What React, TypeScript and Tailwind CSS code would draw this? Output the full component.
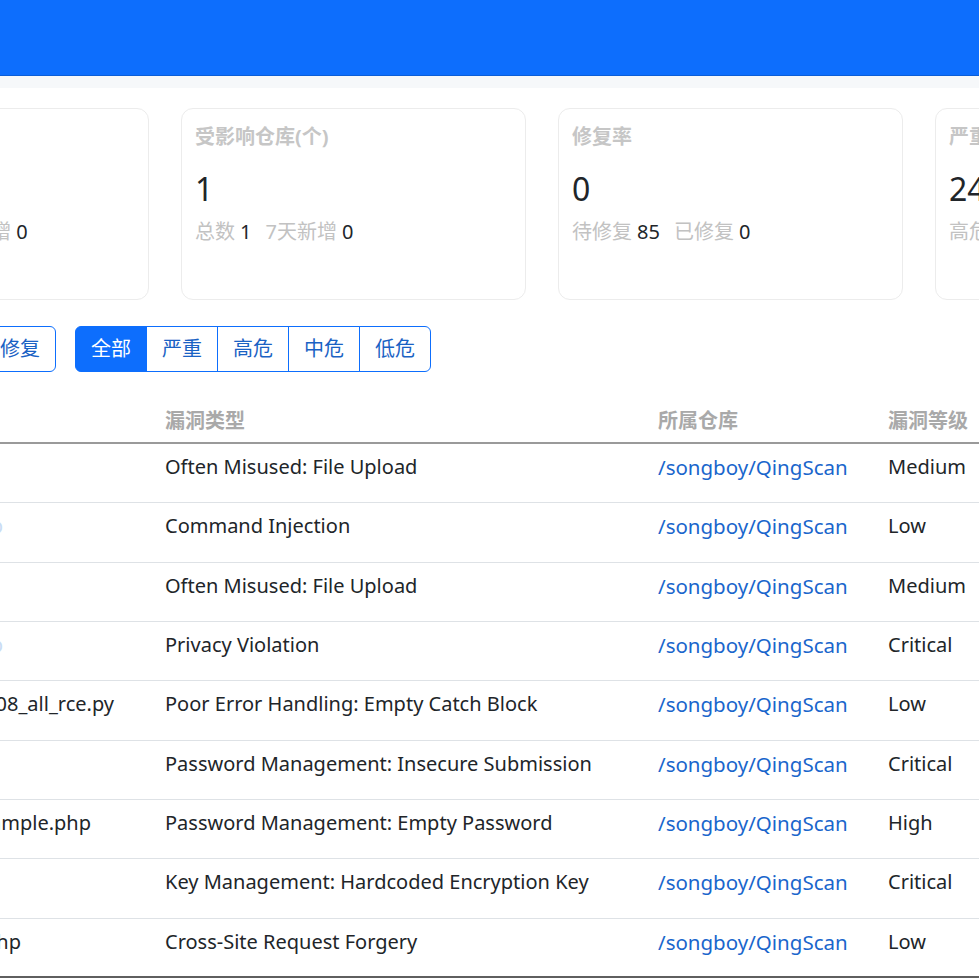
import { ReactNode } from "react";

const font = {
  fontFamily: '"Noto Sans", "Noto Sans CJK SC", sans-serif',
};

type Stat = {
  title: string;
  value: string;
  parts: [string, string][];
};

const stats: Stat[] = [
  { title: "漏洞总数(个)", value: "85", parts: [["漏洞总数", "85"], ["7天新增", "0"]] },
  { title: "受影响仓库(个)", value: "1", parts: [["总数", "1"], ["7天新增", "0"]] },
  { title: "修复率", value: "0", parts: [["待修复", "85"], ["已修复", "0"]] },
  { title: "严重漏洞(个)", value: "24", parts: [["高危", "9"], ["中危", "30"]] },
];

// fileW: where the (mostly hidden) path ends, measured from the cell's text start
const rows = [
  { file: "upload.php", fileW: 150, link: false, type: "Often Misused: File Upload", level: "Medium" },
  { file: "cmd.php", fileW: 193, link: true, type: "Command Injection", level: "Low" },
  { file: "file.php", fileW: 150, link: false, type: "Often Misused: File Upload", level: "Medium" },
  { file: "user.php", fileW: 193, link: true, type: "Privacy Violation", level: "Critical" },
  { file: "thinkphp5_0_08_all_rce.py", fileW: 304, link: false, type: "Poor Error Handling: Empty Catch Block", level: "Low" },
  { file: "login.html", fileW: 150, link: false, type: "Password Management: Insecure Submission", level: "Critical" },
  { file: "sqli_example.php", fileW: 281, link: false, type: "Password Management: Empty Password", level: "High" },
  { file: "app.php", fileW: 150, link: false, type: "Key Management: Hardcoded Encryption Key", level: "Critical" },
  { file: "csrf_test.php", fileW: 211, link: false, type: "Cross-Site Request Forgery", level: "Low" },
];

function StatCard({ stat }: { stat: Stat }) {
  return (
    <div className="w-[345px] h-[192px] flex-none rounded-[12px] border border-[#ececec] bg-white px-[13px] pt-[14px]">
      <div className="text-[20px] leading-[27px] font-bold text-[#c6c6c6]">{stat.title}</div>
      <div className="mt-[20px] text-[32px] leading-[38px] text-[#212529]">{stat.value}</div>
      <div className="mt-[9px] flex text-[20px] leading-[30px]">
        {stat.parts.map(([label, num]) => (
          <span key={label} className="mr-[14px]">
            <span className="text-[#c2c2c2]">{label}</span>
            <span className="ml-[5px] text-[#212529]">{num}</span>
          </span>
        ))}
      </div>
    </div>
  );
}

function Btn({ children, active, first, last }: { children: ReactNode; active?: boolean; first?: boolean; last?: boolean }) {
  return (
    <button
      className={
        "h-[46px] px-[15px] text-[20px] leading-[30px] border border-[#0d6efd] -ml-px first:ml-0 " +
        (active ? "bg-[#0d6efd] text-white " : "bg-white text-[#1a62c4] ") +
        (first ? "rounded-l-[6px] " : "") +
        (last ? "rounded-r-[6px]" : "")
      }
    >
      {children}
    </button>
  );
}

export default function App() {
  return (
    <div className="w-[979px] h-[979px] overflow-hidden bg-white" style={font}>
      <div className="h-[76px] bg-[#0d6efd] border-b border-[#0b5ed7]" />
      <div className="h-[12px] bg-[#f6f8fa]" />

      <div className="mt-[20px] flex gap-[32px] -ml-[196px]">
        {stats.map((s) => (
          <StatCard key={s.title} stat={s} />
        ))}
      </div>

      <div className="mt-[26px] flex items-center gap-[19px]">
        <div className="flex -ml-[198px]">
          <Btn first>全部</Btn>
          <Btn>未修复</Btn>
          <Btn last>已修复</Btn>
        </div>
        <div className="flex">
          <Btn active first>全部</Btn>
          <Btn>严重</Btn>
          <Btn>高危</Btn>
          <Btn>中危</Btn>
          <Btn last>低危</Btn>
        </div>
      </div>

      <div className="mt-[24px] -ml-[200px] w-[1300px]">
        <div className="grid grid-cols-[355px_493px_230px_222px] h-[48px] border-b-2 border-[#9a9a9a] text-[20px] leading-[30px] font-bold text-[#a9a9a9]">
          <div className="px-[10px] pt-[10px]">文件路径</div>
          <div className="px-[10px] pt-[10px]">漏洞类型</div>
          <div className="px-[10px] pt-[10px]">所属仓库</div>
          <div className="px-[10px] pt-[10px]">漏洞等级</div>
        </div>
        {rows.map((r, i) => (
          <div
            key={i}
            className={
              "grid grid-cols-[355px_493px_230px_222px] h-[59.33px] text-[20px] leading-[30px] text-[#212529] " +
              (i === rows.length - 1 ? "border-b-2 border-[#5f5f5f]" : "border-b border-[#dee2e6]")
            }
          >
            <div className="px-[10px] pt-[8px] whitespace-nowrap overflow-hidden">
              <span
                className={"inline-block text-right " + (r.link ? "text-[#c9dcf4]" : "")}
                style={{ width: r.fileW }}
              >
                {r.file}
              </span>
            </div>
            <div className="px-[10px] pt-[8px] whitespace-nowrap">{r.type}</div>
            <div className="px-[10px] pt-[8px] whitespace-nowrap text-[20.5px] text-[#1a66cc]">/songboy/QingScan</div>
            <div className="px-[10px] pt-[8px] whitespace-nowrap">{r.level}</div>
          </div>
        ))}
      </div>
    </div>
  );
}
